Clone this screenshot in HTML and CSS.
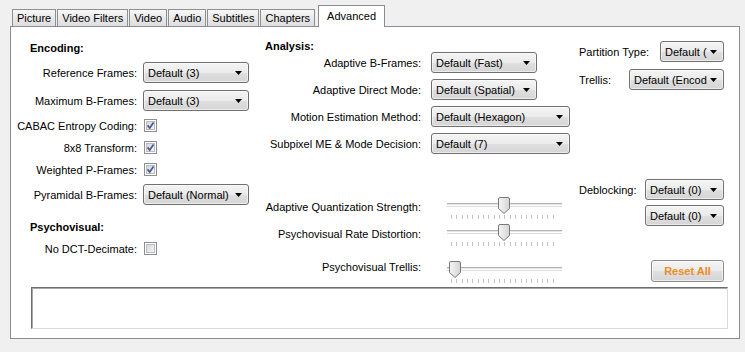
FILE: index.html
```html
<!DOCTYPE html>
<html lang="en">
<head>
  <meta charset="UTF-8" />
  <meta name="viewport" content="width=device-width, initial-scale=1.0"/>
  <title>Advanced</title>
  <link rel="stylesheet" href="styles.css">
</head>
<body>
  <!-- shared glyphs -->
  <svg class="defs" width="0" height="0">
    <defs>
      <linearGradient id="thumbFill" x1="0" y1="0" x2="1" y2="0">
        <stop offset="0" stop-color="#f6f6f6"/>
        <stop offset="1" stop-color="#d4d4d4"/>
      </linearGradient>
      <linearGradient id="boxFill" x1="0" y1="0" x2="1" y2="1">
        <stop offset="0" stop-color="#d2d5da"/>
        <stop offset="1" stop-color="#f7f7f7"/>
      </linearGradient>
    </defs>
    <symbol id="arrow" viewBox="0 0 7 4"><path d="M0 0h7L3.5 4z"/></symbol>
    <symbol id="box" viewBox="0 0 13 13">
      <rect x="0.5" y="0.5" width="12" height="12" fill="#fff" stroke="#8e8f8f"/>
      <rect x="2.5" y="2.5" width="8" height="8" fill="url(#boxFill)" stroke="#b9bdc3"/>
    </symbol>
    <symbol id="mark" viewBox="0 0 13 13">
      <path d="M3.6 6.4l2.1 2.6 3.8-5.6" fill="none" stroke="#4a5a8c" stroke-width="1.7"/>
    </symbol>
    <symbol id="thumb" viewBox="0 0 12 17">
      <path d="M2 0.5h8a1.5 1.5 0 0 1 1.5 1.5v9.5L6 16.5 0.5 11.5V2A1.5 1.5 0 0 1 2 0.5z" fill="url(#thumbFill)" stroke="#787878"/>
    </symbol>
  </svg>

  <div class="tabs">
    <div class="tab">Picture</div>
    <div class="tab">Video Filters</div>
    <div class="tab">Video</div>
    <div class="tab">Audio</div>
    <div class="tab">Subtitles</div>
    <div class="tab">Chapters</div>
    <div class="tab active">Advanced</div>
  </div>

  <div class="panel">
    <div class="columns">

      <div class="col left">
        <div class="heading">Encoding:</div>
        <div class="row">
          <label>Reference Frames:</label>
          <div class="select w106"><span>Default (3)</span><svg class="arrow"><use href="#arrow"/></svg></div>
        </div>
        <div class="row">
          <label>Maximum B-Frames:</label>
          <div class="select w106"><span>Default (3)</span><svg class="arrow"><use href="#arrow"/></svg></div>
        </div>
        <div class="row check">
          <label>CABAC Entropy Coding:</label>
          <svg class="box"><use href="#box"/><use href="#mark"/></svg>
        </div>
        <div class="row check">
          <label>8x8 Transform:</label>
          <svg class="box"><use href="#box"/><use href="#mark"/></svg>
        </div>
        <div class="row check">
          <label>Weighted P-Frames:</label>
          <svg class="box"><use href="#box"/><use href="#mark"/></svg>
        </div>
        <div class="row">
          <label>Pyramidal B-Frames:</label>
          <div class="select w106"><span>Default (Normal)</span><svg class="arrow"><use href="#arrow"/></svg></div>
        </div>
        <div class="heading psy">Psychovisual:</div>
        <div class="row check">
          <label>No DCT-Decimate:</label>
          <svg class="box"><use href="#box"/></svg>
        </div>
      </div>

      <div class="col mid">
        <div class="heading">Analysis:</div>
        <div class="row">
          <label>Adaptive B-Frames:</label>
          <div class="select w106"><span>Default (Fast)</span><svg class="arrow"><use href="#arrow"/></svg></div>
        </div>
        <div class="row">
          <label>Adaptive Direct Mode:</label>
          <div class="select w106"><span>Default (Spatial)</span><svg class="arrow"><use href="#arrow"/></svg></div>
        </div>
        <div class="row">
          <label>Motion Estimation Method:</label>
          <div class="select w139"><span>Default (Hexagon)</span><svg class="arrow"><use href="#arrow"/></svg></div>
        </div>
        <div class="row">
          <label>Subpixel ME &amp; Mode Decision:</label>
          <div class="select w139"><span>Default (7)</span><svg class="arrow"><use href="#arrow"/></svg></div>
        </div>

        <div class="row slide aq">
          <label>Adaptive Quantization Strength:</label>
          <div class="slider">
            <div class="track"></div>
            <div class="ticks"></div>
            <svg class="thumb" style="left: 51px"><use href="#thumb"/></svg>
          </div>
        </div>
        <div class="row slide rd">
          <label>Psychovisual Rate Distortion:</label>
          <div class="slider">
            <div class="track"></div>
            <div class="ticks"></div>
            <svg class="thumb" style="left: 51px"><use href="#thumb"/></svg>
          </div>
        </div>
        <div class="row slide trellis">
          <label>Psychovisual Trellis:</label>
          <div class="slider">
            <div class="track"></div>
            <div class="ticks"></div>
            <svg class="thumb" style="left: 2px"><use href="#thumb"/></svg>
          </div>
        </div>
      </div>

      <div class="col right">
        <div class="row">
          <label>Partition Type:</label>
          <div class="select w64"><span>Default (</span><svg class="arrow"><use href="#arrow"/></svg></div>
        </div>
        <div class="row">
          <label>Trellis:</label>
          <div class="select w95"><span>Default (Encod</span><svg class="arrow"><use href="#arrow"/></svg></div>
        </div>
        <div class="row deblock">
          <label>Deblocking:</label>
          <div class="select w79"><span>Default (0)</span><svg class="arrow"><use href="#arrow"/></svg></div>
        </div>
        <div class="row deblock2">
          <div class="select w79"><span>Default (0)</span><svg class="arrow"><use href="#arrow"/></svg></div>
        </div>
        <div class="row reset">
          <button type="button">Reset All</button>
        </div>
      </div>

    </div>

    <div class="log"></div>
  </div>
</body>
</html>
```

FILE: styles.css
```css
body {
  margin: 0;
  background: #f0f0f0;
  font-family: "Liberation Sans", Arial, sans-serif;
  font-size: 11px;
  color: #000;
}

.defs {
  position: absolute;
  width: 0;
  height: 0;
}

/* tab strip */

.tabs {
  display: flex;
  align-items: flex-end;
  height: 26px;
  padding-left: 12px;
}

.tab {
  box-sizing: border-box;
  height: 17px;
  line-height: 16px;
  padding: 0 4px;
  margin-right: 1px;
  border: 1px solid #8e8f8f;
  border-bottom: none;
  background: linear-gradient(#f7f7f7, #e9e9e9 50%, #dedede);
}

.tab.active {
  position: relative;
  z-index: 1;
  height: 22px;
  line-height: 20px;
  margin-bottom: -1px;
  margin-left: 2px;
  padding: 0 8px;
  background: #fff;
  border-color: #898c95;
}

/* panel */

.panel {
  margin: 0 5px 0 10px;
  height: 313px;
  box-sizing: border-box;
  border: 1px solid #898c95;
  background: #fff;
}

.columns {
  display: flex;
  box-sizing: border-box;
  height: 260px;
  padding-top: 14px;
}

.col {
  display: flex;
  flex-direction: column;
}

.heading {
  font-weight: bold;
  line-height: 14px;
}

.row {
  display: flex;
  align-items: center;
  height: 21px;
  margin-top: 7px;
}

.row label {
  text-align: right;
  white-space: nowrap;
}

/* left column */

.left {
  width: 251px;
}

.left .heading {
  padding-left: 19px;
}

.left .heading.psy {
  margin-top: 15px;
}

.left label {
  width: 126px;
  margin-right: 6px;
}

.row.check {
  height: 15px;
}

.box {
  width: 13px;
  height: 13px;
  margin-left: 1px;
}

/* middle column */

.mid {
  width: 317px;
}

.mid .heading {
  line-height: 11px;
  padding-left: 3px;
}

.mid .row {
  margin-top: 6px;
}

.mid .heading + .row {
  margin-top: 0;
}

.mid label {
  width: 159px;
  margin-right: 10px;
}

.mid .row.slide {
  align-items: flex-start;
  height: 23px;
}

.slide label {
  padding-top: 4px;
  line-height: 14px;
}

.mid .row.aq {
  margin-top: 42px;
}

.mid .row.rd {
  margin-top: 4px;
}

.mid .row.trellis {
  margin-top: 14px;
}

.trellis label {
  padding-top: 0;
}

.slider {
  position: relative;
  width: 115px;
  height: 23px;
  margin-left: 16px;
}

.track {
  box-sizing: border-box;
  height: 3px;
  margin-top: 7px;
  border-top: 1px solid #b4b4b4;
  border-bottom: 1px solid #fff;
  background: #e6e6e6;
  box-shadow: 0 1px 0 #dcdcdc;
}

.ticks {
  height: 4px;
  margin: 9px 4px 0 4px;
  background: repeating-linear-gradient(to right, #c4c4c4 0 1px, transparent 1px 5.35px);
}

.thumb {
  position: absolute;
  top: 1px;
  width: 12px;
  height: 17px;
}

/* right column */

.right {
  width: 145px;
}

.right .row {
  justify-content: space-between;
}

.right .row:first-child {
  margin-top: 0;
}

.right .row.deblock {
  margin-top: 89px;
}

.right .row.deblock2 {
  justify-content: flex-end;
  margin-top: 5px;
}

.right .row.reset {
  justify-content: flex-end;
  height: 22px;
  margin-top: 34px;
}

/* combo boxes */

.select {
  display: flex;
  align-items: center;
  box-sizing: border-box;
  height: 21px;
  padding: 0 6px 0 4px;
  border: 1px solid #707070;
  border-radius: 3px;
  background: linear-gradient(#f4f4f4, #ebebeb 50%, #dfdfdf 51%, #d5d5d5);
  box-shadow: inset 0 0 0 1px rgba(255, 255, 255, 0.55);
}

.select span {
  flex: 1;
  overflow: hidden;
  white-space: nowrap;
}

.arrow {
  width: 7px;
  height: 4px;
  margin-left: 3px;
  fill: #000;
}

.w64 { width: 64px; }
.w79 { width: 79px; }
.w95 { width: 95px; }
.w106 { width: 106px; }
.w139 { width: 139px; }

button {
  box-sizing: border-box;
  width: 73px;
  height: 22px;
  padding: 0;
  border: 1px solid #8a8a8a;
  border-radius: 3px;
  background: linear-gradient(#f4f4f4, #ebebeb 50%, #dfdfdf 51%, #d5d5d5);
  box-shadow: inset 0 0 0 1px rgba(255, 255, 255, 0.6);
  font-family: "Liberation Sans", Arial, sans-serif;
  font-size: 11px;
  font-weight: bold;
  color: #f08c1c;
}

/* log box */

.log {
  box-sizing: border-box;
  height: 42px;
  margin: 0 11px 0 20px;
  border: 1px solid;
  border-color: #6d6d6d #dadada #dadada #6d6d6d;
  box-shadow: inset 1px 1px 0 #a8a8a8;
  background: #fff;
}
```
